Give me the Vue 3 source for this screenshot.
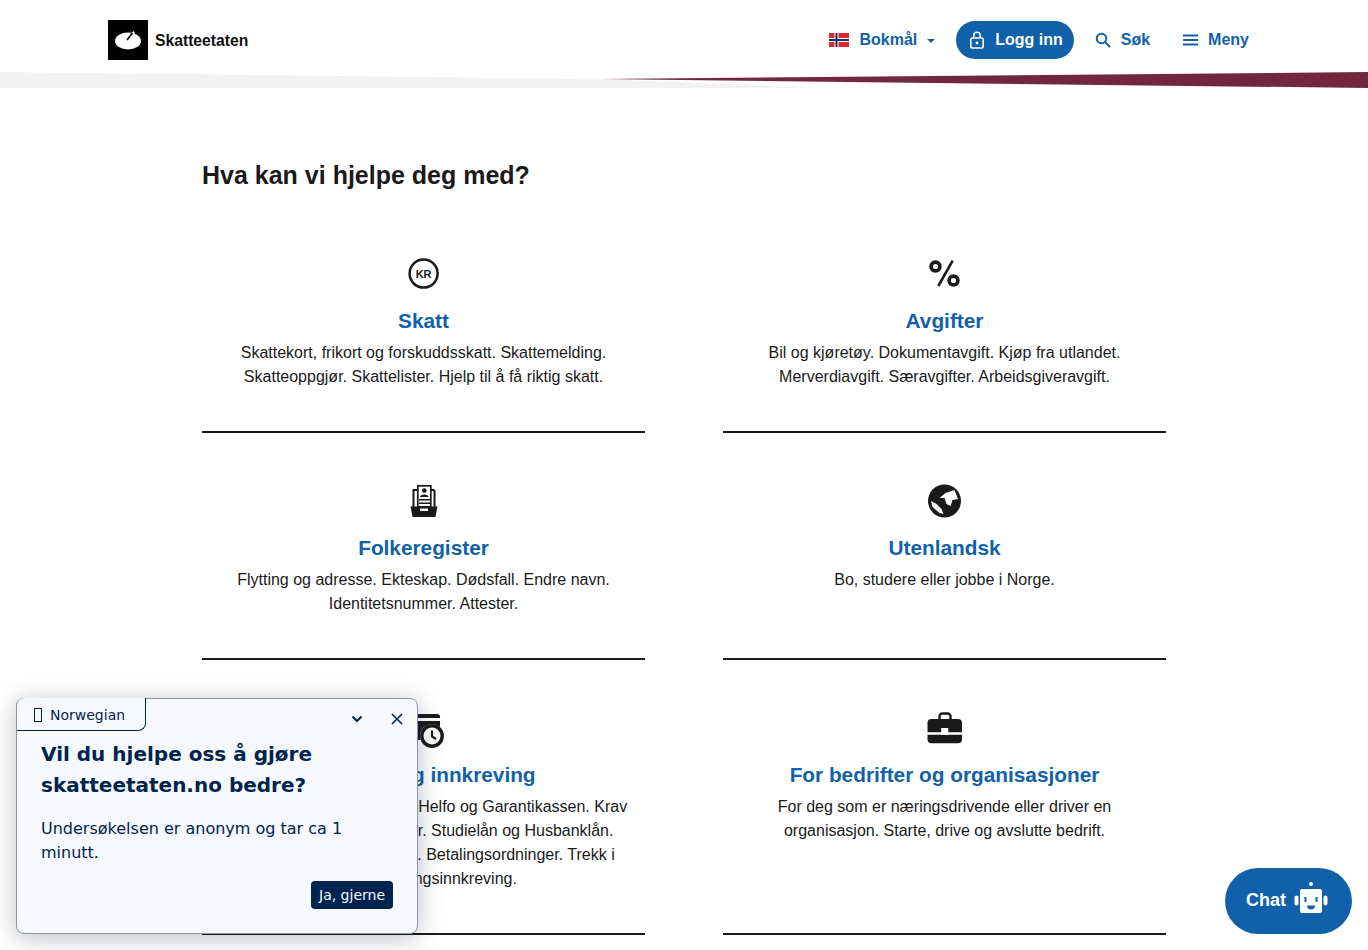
<script setup>
const cards = [
  { id: 'skatt', title: 'Skatt', text: 'Skattekort, frikort og forskuddsskatt. Skattemelding. Skatteoppgjør. Skattelister. Hjelp til å få riktig skatt.' },
  { id: 'avgifter', title: 'Avgifter', text: 'Bil og kjøretøy. Dokumentavgift. Kjøp fra utlandet. Merverdiavgift. Særavgifter. Arbeidsgiveravgift.' },
  { id: 'folk', title: 'Folkeregister', text: 'Flytting og adresse. Ekteskap. Dødsfall. Endre navn. Identitetsnummer. Attester.' },
  { id: 'utland', title: 'Utenlandsk', text: 'Bo, studere eller jobbe i Norge.' },
  { id: 'betaling', title: 'Betaling og innkreving', text: 'Inntektsskatt. Krav fra NAV, Helfo og Garantikassen. Krav fra politiet og namsmenner. Studielån og Husbanklån. Betaling av skatt og renter. Betalingsordninger. Trekk i lønn, og tvangsinnkreving.' },
  { id: 'bedrift', title: 'For bedrifter og organisasjoner', text: 'For deg som er næringsdrivende eller driver en organisasjon. Starte, drive og avslutte bedrift.' },
]
</script>

<template>
  <div class="page">
    <header class="header">
      <a class="brand" href="#">
        <svg class="logo" viewBox="0 0 40 40">
          <rect width="40" height="40" fill="#000" />
          <ellipse cx="20" cy="21" rx="13" ry="8.5" fill="#fff" />
          <path d="M21 15 L25.500 11 L27 13 L23 17 Z" fill="#fff" />
          <path d="M19 20 L24.500 13" stroke="#000" stroke-width="1.6" />
        </svg>
        <span class="brand-name">Skatteetaten</span>
      </a>
      <nav class="nav">
        <a class="lang" href="#">
          <svg class="flag" viewBox="0 0 20 14">
            <rect width="20" height="14" fill="#e0262e" />
            <rect x="5.5" width="4" height="14" fill="#fff" />
            <rect y="5" width="20" height="4" fill="#fff" />
            <rect x="6.5" width="2" height="14" fill="#1a2b66" />
            <rect y="6" width="20" height="2" fill="#1a2b66" />
          </svg>
          <span>Bokmål</span>
          <svg class="caret" viewBox="0 0 8 4"><path d="M0 0H8L4 4Z" fill="currentColor" /></svg>
        </a>
        <a class="login" href="#">
          <svg class="lock" viewBox="0 0 16 18" fill="none" stroke="#fff" stroke-width="1.6">
            <rect x="1.8" y="7" width="12.4" height="10" rx="1.5" />
            <path d="M4.8 7V4.4a3.2 3.2 0 0 1 6.4 0V7" />
            <circle cx="8" cy="12" r="1.4" fill="#fff" stroke="none" />
          </svg>
          <span>Logg inn</span>
        </a>
        <a class="link search" href="#">
          <svg class="nav-icon" viewBox="0 0 18 18" fill="none" stroke="currentColor" stroke-width="2">
            <circle cx="7.5" cy="7.5" r="4.8" />
            <path d="M11 11L16 16" />
          </svg>
          <span>Søk</span>
        </a>
        <a class="link menu" href="#">
          <svg class="nav-icon" viewBox="0 0 18 18" stroke="currentColor" stroke-width="1.9">
            <path d="M2 4.5H17M2 9H17M2 13.5H17" />
          </svg>
          <span>Meny</span>
        </a>
      </nav>
    </header>

    <svg class="stripe" viewBox="0 0 1368 16" preserveAspectRatio="none">
      <polygon points="0,0 600,7 820,16 0,16" fill="#f2f2f2" />
      <polygon points="600,7 1368,0 1368,16" fill="#72273f" />
    </svg>

    <main class="main">
      <h2 class="heading">Hva kan vi hjelpe deg med?</h2>
      <div class="grid">
        <a v-for="c in cards" :key="c.id" class="card" href="#">
          <svg v-if="c.id === 'skatt'" class="icon" viewBox="0 0 32 32">
            <circle cx="15.6" cy="15.6" r="14" fill="none" stroke="#1a1a1a" stroke-width="2.5" />
            <text x="15.6" y="19.600" text-anchor="middle" class="kr">KR</text>
          </svg>
          <svg v-else-if="c.id === 'avgifter'" class="icon" viewBox="0 0 32 32" fill="none" stroke="#1a1a1a" stroke-width="3.6">
            <circle cx="6.500" cy="8.500" r="4.400" />
            <circle cx="24.500" cy="22.500" r="4.400" />
            <path d="M23.7 2.7L9.3 28" stroke-width="2.6" />
          </svg>
          <svg v-else-if="c.id === 'folk'" class="icon" viewBox="0 0 32 32">
            <path d="M5.500 22V5H9M26.500 5V22M23 5H26.500" fill="none" stroke="#1a1a1a" stroke-width="2" />
            <rect x="9.800" y="0.800" width="13" height="21" fill="#fff" stroke="#1a1a1a" stroke-width="1.700" />
            <circle cx="16.300" cy="5.500" r="2.300" fill="#1a1a1a" />
            <path d="M12 12c0-3.500 8.600-3.500 8.600 0Z" fill="#1a1a1a" />
            <path d="M11 14.800H22M11 18.300H22" stroke="#1a1a1a" stroke-width="1.600" />
            <path d="M2.500 21.500H29.500L27.500 32H4.500Z" fill="#1a1a1a" />
            <rect x="12" y="23.500" width="8" height="2.500" fill="#fff" />
          </svg>
          <svg v-else-if="c.id === 'utland'" class="icon" viewBox="0 0 32 32">
            <circle cx="15.500" cy="16" r="16.500" fill="#1a1a1a" />
            <path d="M16.500 8L25.500 5L29 14L23.500 15L21.500 21L17.500 19L15.500 13L10.500 13Z" fill="#fff" />
            <path d="M2 16L7.500 19L12.500 24L14.500 29L10.500 28L3.500 22Z" fill="#fff" />
          </svg>
          <svg v-else-if="c.id === 'betaling'" class="icon" viewBox="0 0 32 32">
            <rect x="0" y="2" width="32" height="26" rx="3" fill="#1a1a1a" />
            <rect x="0" y="6" width="32" height="3" fill="#fff" />
            <circle cx="24" cy="24" r="12" fill="#fff" />
            <circle cx="24" cy="24" r="10.200" fill="#fff" stroke="#1a1a1a" stroke-width="3.400" />
            <path d="M24 18.500V24.500L28 27" fill="none" stroke="#1a1a1a" stroke-width="2.200" />
          </svg>
          <svg v-else class="icon" viewBox="0 0 32 32">
            <path d="M10.500 8V4.500a3 3 0 0 1 3-3h5a3 3 0 0 1 3 3V8" fill="none" stroke="#1a1a1a" stroke-width="2.400" />
            <path d="M-1.500 11a4 4 0 0 1 4-4H29a4 4 0 0 1 4 4V20.300H19.300V16H12.200V20.300H-1.500Z" fill="#1a1a1a" />
            <path d="M-1.500 22.700H12.200V23H19.300V22.700H33V27.300a4 4 0 0 1-4 4H2.500a4 4 0 0 1-4-4Z" fill="#1a1a1a" />
          </svg>
          <h3 class="card-title">{{ c.title }}</h3>
          <p class="card-text">{{ c.text }}</p>
        </a>
      </div>
    </main>

    <aside class="survey">
      <div class="tab"><span class="tofu"></span><span>Norwegian</span></div>
      <button class="ctl ctl-min" aria-label="Minimer">
        <svg viewBox="0 0 12 8" fill="none" stroke="#00244e" stroke-width="2"><path d="M1.500 1.500L6 6L10.500 1.500" /></svg>
      </button>
      <button class="ctl ctl-close" aria-label="Lukk">
        <svg viewBox="0 0 12 12" fill="none" stroke="#00244e" stroke-width="1.600"><path d="M1 1L11 11M11 1L1 11" /></svg>
      </button>
      <h4 class="survey-title">Vil du hjelpe oss å gjøre skatteetaten.no bedre?</h4>
      <p class="survey-text">Undersøkelsen er anonym og tar ca 1 minutt.</p>
      <div class="survey-actions"><button class="yes">Ja, gjerne</button></div>
    </aside>

    <button class="chat">
      <span class="chat-label">Chat</span>
      <svg class="robot" viewBox="0 0 34 32" fill="#fff">
        <circle cx="17" cy="3" r="2" />
        <rect x="6" y="8" width="22" height="24" rx="2" />
        <rect x="0.500" y="14.500" width="4" height="10" rx="2" />
        <rect x="29.500" y="14.500" width="4" height="10" rx="2" />
        <rect x="10.500" y="16" width="2" height="5" fill="#1161aa" />
        <rect x="21.500" y="16" width="2" height="5" fill="#1161aa" />
        <path d="M13 24.500H21A4 4 0 0 1 13 24.500Z" fill="#1161aa" />
      </svg>
    </button>
  </div>
</template>

<style scoped>
.page {
  position: relative;
  height: 950px;
  overflow: hidden;
  background: #fff;
  color: #1a1a1a;
  font-family: "Liberation Sans", Arial, sans-serif;
  font-size: 16px;
  line-height: 24px;
}
a { text-decoration: none; color: inherit; }
.header {
  height: 72px;
  box-sizing: border-box;
  padding: 8px 119px 0 108px;
  display: flex;
  align-items: center;
  justify-content: space-between;
}
.brand { display: flex; align-items: center; gap: 7px; }
.logo { width: 40px; height: 40px; display: block; }
.brand-name { margin-top: 1px; font-size: 15.7px; font-weight: 700; color: #111; }
.nav { display: flex; align-items: center; font-weight: 700; color: #1161aa; }
.lang, .login, .link { display: flex; align-items: center; }
.lang { gap: 10px; margin-right: 21px; }
.flag { width: 20px; height: 14px; display: block; }
.caret { width: 8px; height: 4px; display: block; margin-top: 2px; }
.login {
  height: 38px;
  padding: 0 11px 0 13px;
  gap: 10px;
  border-radius: 19px;
  background: #1161aa;
  color: #fff;
}
.lock { width: 16px; height: 18px; display: block; }
.link { gap: 9px; }
.search { margin-left: 20px; }
.menu { margin-left: 31px; }
.nav-icon { width: 18px; height: 18px; display: block; }
.stripe { display: block; width: 100%; height: 16px; }
.main { padding: 71px 202px 0; }
.heading {
  margin: 0 0 15px;
  font-size: 25px;
  line-height: 32px;
  font-weight: 700;
}
.grid {
  display: grid;
  grid-template-columns: 1fr 1fr;
  column-gap: 78px;
}
.card {
  display: flex;
  flex-direction: column;
  align-items: center;
  padding: 52px 12px 42px;
  border-bottom: 2px solid #1a1a1a;
  text-align: center;
}
.icon { width: 32px; height: 32px; display: block; overflow: visible; }
.kr { font: 700 11px "Liberation Sans", Arial, sans-serif; fill: #1a1a1a; }
.card-title {
  margin: 18px 0 7px;
  font-size: 20.8px;
  line-height: 26px;
  font-weight: 700;
  color: #1161aa;
}
.card-text { margin: 0; }
.survey {
  position: absolute;
  left: 16px;
  top: 698px;
  width: 402px;
  height: 236px;
  box-sizing: border-box;
  padding: 40px 24px 0;
  background: #f5f8fc;
  border: 1px solid #8b95a7;
  border-radius: 8px;
  box-shadow: 0 4px 24px rgba(30, 40, 60, 0.3);
  font-family: "DejaVu Sans", sans-serif;
  color: #00244e;
}
.tab {
  position: absolute;
  left: -1px;
  top: -1px;
  width: 130px;
  height: 33px;
  box-sizing: border-box;
  display: flex;
  align-items: center;
  gap: 8px;
  padding: 1px 0 0 17px;
  border: 1px solid #00244e;
  border-top: 0;
  border-radius: 8px 0 8px 0;
  border-left-color: #8b95a7;
  background: #f5f8fc;
  font-size: 14px;
}
.tofu {
  width: 6px;
  height: 12px;
  border: 1px solid #00244e;
}
.ctl {
  position: absolute;
  top: 12px;
  width: 16px;
  height: 16px;
  padding: 2px;
  border: 0;
  background: none;
}
.ctl svg { display: block; width: 12px; height: 12px; }
.ctl-min { left: 332px; }
.ctl-close { left: 372px; }
.survey-title {
  margin: 0 0 16px;
  font-size: 20px;
  line-height: 31px;
  font-weight: 700;
}
.survey-text { margin: 0 0 16px; font-size: 16px; line-height: 24px; }
.survey-actions { display: flex; justify-content: flex-end; }
.yes {
  width: 82px;
  height: 28px;
  padding: 0;
  border: 0;
  border-radius: 4px;
  background: #00244e;
  color: #f5f8fc;
  font: 14px "DejaVu Sans", sans-serif;
}
.chat {
  position: absolute;
  left: 1225px;
  top: 868px;
  width: 127px;
  height: 66px;
  box-sizing: border-box;
  display: flex;
  align-items: center;
  gap: 8px;
  padding: 0 0 0 21px;
  border: 0;
  border-radius: 33px;
  background: #1161aa;
  color: #fff;
  font: 700 18px "Liberation Sans", Arial, sans-serif;
}
.chat-label { margin-bottom: 2px; }
.robot { width: 34px; height: 32px; display: block; margin-bottom: 8px; }
</style>

<style>
html, body { margin: 0; height: 950px; overflow: hidden; background: #fff; }
</style>
